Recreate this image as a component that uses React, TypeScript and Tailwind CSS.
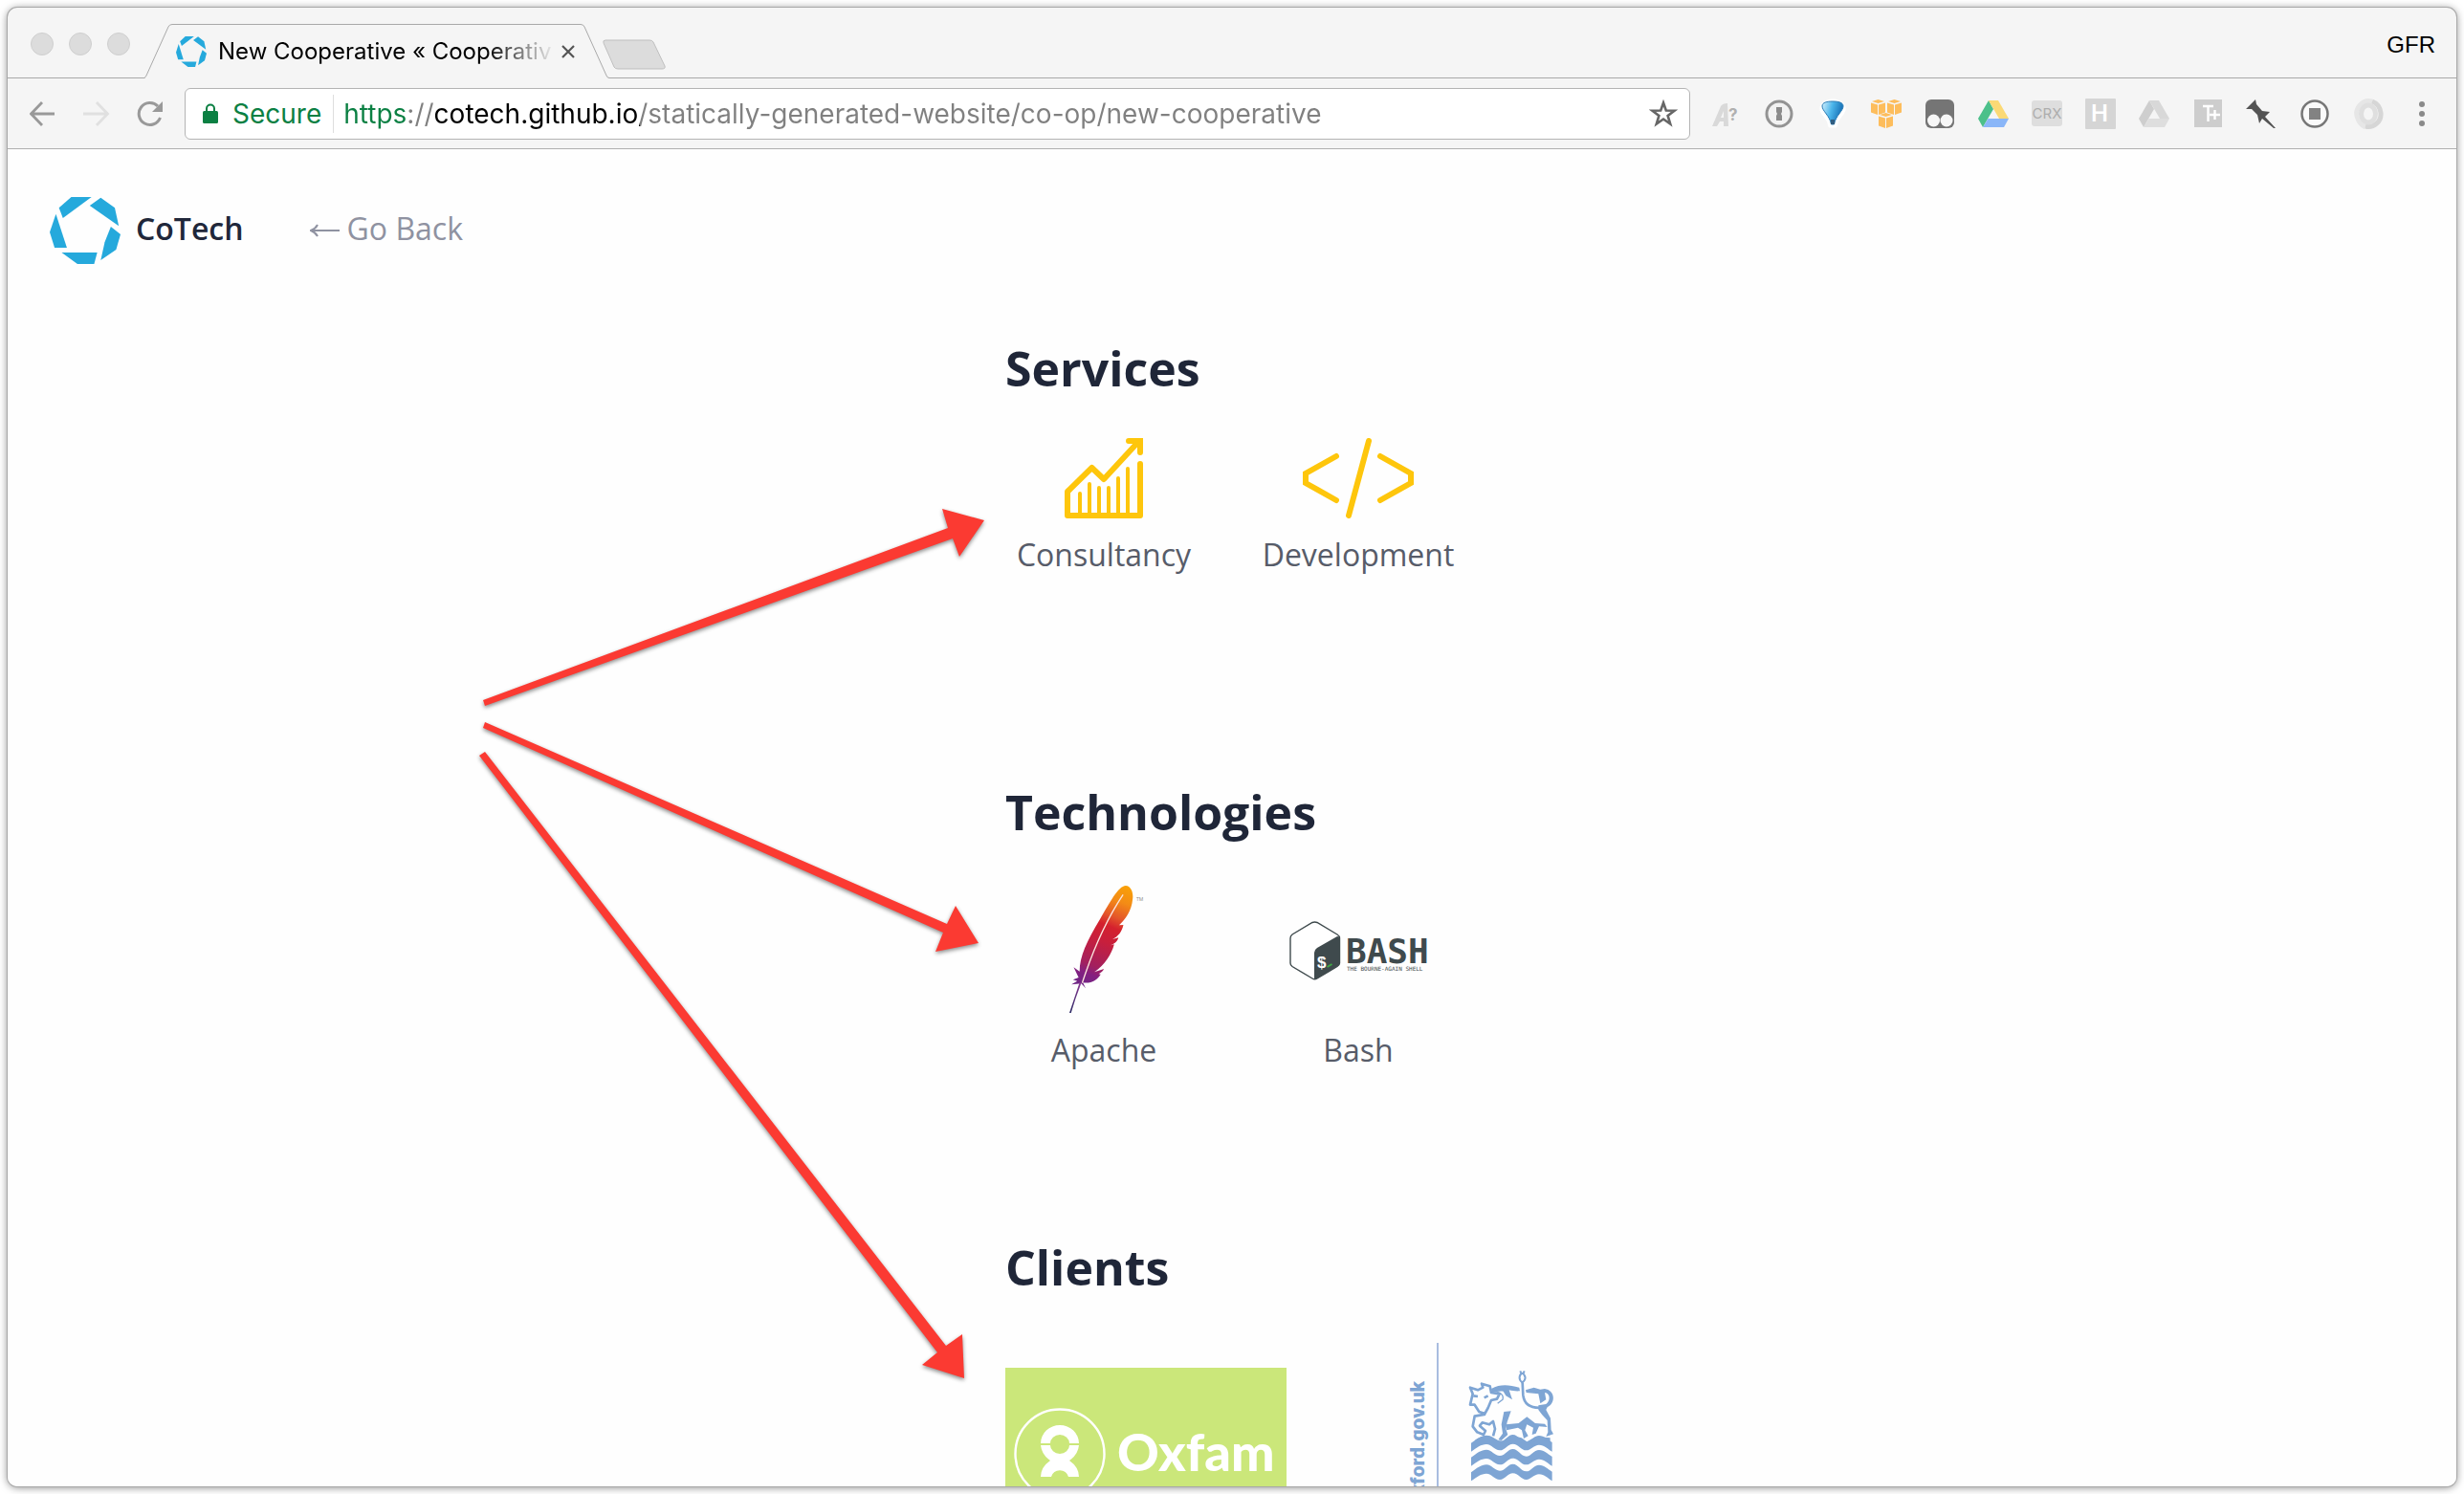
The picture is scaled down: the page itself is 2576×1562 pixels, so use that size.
import type { ReactNode } from "react";

function CoTechMark({ className }: { className: string }) {
  return (
    <svg className={className} viewBox="113 618 161 210" preserveAspectRatio="none" fill="#25a9dc" aria-hidden="true">
      <path d="M162 618H208L143 684L134 652Z" />
      <path d="M229 620L261 652L270 709L204 645Z" />
      <path d="M252 711L274 735L264 783L229 816L238 760Z" />
      <path d="M140 792H221L214 828H176Z" />
      <path d="M127 671L152 777H124L113 728Z" />
    </svg>
  );
}

function TabStrip() {
  return (
    <div className="flex h-[74px] items-end border-b border-[#a9a9a9]">
      <div className="flex gap-4 self-center pt-[3px] pl-6">
        {["Close window", "Minimise window", "Zoom window"].map((name) => (
          <button key={name} aria-label={name} className="size-6 rounded-full border border-[#cfcfcf] bg-[#dcdcdc]" />
        ))}
      </div>
      <div className="-mb-px ml-[15px] grid w-[486px]">
        <svg className="col-start-1 row-start-1 h-[57px] w-full" viewBox="0 0 486 57" aria-hidden="true">
          <path d="M0 56.5Q1 56 2 54L25 3Q26 .5 29 .5H456Q459 .5 460 3L483 54Q484 56.5 486 56.5V57H0Z" fill="#f5f5f5" />
          <path d="M0 56.5Q1 56 2 54L25 3Q26 .5 29 .5H456Q459 .5 460 3L483 54Q484 56.5 486 56.5" fill="none" stroke="#a9a9a9" />
        </svg>
        <div className="col-start-1 row-start-1 flex items-center pr-9 pl-[33px]">
          <CoTechMark className="size-8 shrink-0" />
          <span className="ml-3 flex-1 overflow-hidden bg-[linear-gradient(to_right,#000_280px,#f0f0f0_352px)] bg-clip-text text-2xl whitespace-nowrap text-transparent">
            New Cooperative « Cooperativ
          </span>
          <button aria-label="Close tab" className="ml-2">
            <svg className="size-[14px]" viewBox="0 0 14 14" stroke="#555" strokeWidth="2.2" aria-hidden="true">
              <path d="M1 1L13 13M13 1L1 13" />
            </svg>
          </button>
        </div>
      </div>
      <button aria-label="New tab" className="mb-2 -ml-2">
        <svg className="h-8 w-[67px]" viewBox="0 0 67 32" aria-hidden="true">
          <path d="M4 1H50Q53 1 54 3L66 28Q67 31 63 31H17Q14 31 13 29L2 4Q1 1 4 1Z" fill="#dcdcdc" stroke="#bfbfbf" />
        </svg>
      </button>
      <button className="mr-[22px] ml-auto self-center pt-1 font-['Liberation_Sans',sans-serif] text-2xl text-black">GFR</button>
    </div>
  );
}

function Drive({ colors }: { colors: [string, string, string] }) {
  return (
    <svg className="size-8" viewBox="0 0 32 32" aria-hidden="true">
      <path d="M11 2L0 21L5 30L16 11Z" fill={colors[0]} />
      <path d="M11 2H21L32 21H22Z" fill={colors[1]} />
      <path d="M10.500 21H32L27 30H5Z" fill={colors[2]} />
    </svg>
  );
}

const extensions: { name: string; icon: ReactNode }[] = [
  {
    name: "Font finder",
    icon: (
      <svg className="size-8" viewBox="0 0 32 32" aria-hidden="true">
        <path d="M2 29L11 8Q13 5 18 5L19 29H14V24H10L7 29ZM11 20H14V13Z" fill="#d9d9d9" fillRule="evenodd" />
        <text x="19" y="23" fontSize="17" fontWeight="700" fill="#b0b0b0">?</text>
      </svg>
    ),
  },
  {
    name: "1Password",
    icon: (
      <svg className="size-8" viewBox="0 0 32 32" aria-hidden="true">
        <circle cx="16" cy="16" r="13" fill="#f2f2f2" stroke="#939393" strokeWidth="3" />
        <path d="M13 9H19V14L18 16L19 18V23H13V18L14 16L13 14Z" fill="#8b8b8b" />
      </svg>
    ),
  },
  {
    name: "Balloon",
    icon: (
      <svg className="size-8" viewBox="0 0 32 32" aria-hidden="true">
        <defs>
          <linearGradient id="balloon" x1="0" x2="1" y1="0" y2=".3">
            <stop offset="0" stopColor="#d4f0fd" />
            <stop offset=".5" stopColor="#4bb5ea" />
            <stop offset="1" stopColor="#156fb5" />
          </linearGradient>
        </defs>
        <path d="M16 2C24 2 29 7 28 12C26 19 20 20 19 29H13C12 20 6 19 4 12C3 7 8 2 16 2Z" fill="#fff" stroke="#fff" strokeWidth="3" strokeLinejoin="round" />
        <path d="M16 3C22 3 27 4 27 8C27 13 19 18 17.500 27H14.500C13 18 5 13 5 8C5 4 10 3 16 3Z" fill="url(#balloon)" stroke="#2b7cb5" />
        <path d="M14 22H18V27H14Z" fill="#315d80" />
      </svg>
    ),
  },
  {
    name: "AWS",
    icon: (
      <svg className="size-8" viewBox="0 0 32 32" aria-hidden="true">
        {["translate(0 1)", "translate(17 1)", "translate(8 15)"].map((t) => (
          <g key={t} transform={t} fill="#fdbd5c">
            <path d="M1 2L7.500 0L14 2L7.500 4Z" />
            <path d="M0 3.500L7 5.500V16L0 13.500Z" />
            <path d="M15 3.500L8 5.500V16L15 13.500Z" />
          </g>
        ))}
      </svg>
    ),
  },
  {
    name: "Tampermonkey",
    icon: (
      <svg className="size-8" viewBox="0 0 32 32" aria-hidden="true">
        <rect x="1" y="1" width="30" height="30" rx="6" fill="#757575" />
        <circle cx="9.500" cy="23" r="6.500" fill="#f7f7f7" />
        <circle cx="23" cy="23" r="6.500" fill="#f7f7f7" />
      </svg>
    ),
  },
  { name: "Google Drive", icon: <Drive colors={["#4cc08a", "#fbd975", "#8ab6f8"]} /> },
  {
    name: "CRX viewer",
    icon: (
      <svg className="size-8" viewBox="0 0 32 32" aria-hidden="true">
        <rect y="2" width="32" height="27" rx="3" fill="#dedede" />
        <text x="16" y="21" textAnchor="middle" fontSize="15" fill="#adadad">CRX</text>
      </svg>
    ),
  },
  {
    name: "Header tool",
    icon: (
      <svg className="size-8" viewBox="0 0 32 32" aria-hidden="true">
        <rect width="32" height="32" rx="1" fill="#d5d5d5" />
        <text x="15" y="24" textAnchor="middle" fontSize="24" fontWeight="600" fill="#fff">H</text>
      </svg>
    ),
  },
  { name: "Drive saver", icon: <Drive colors={["#cecece", "#d8d8d8", "#dedede"]} /> },
  {
    name: "Text tool",
    icon: (
      <svg className="size-8" viewBox="0 0 32 32" aria-hidden="true">
        <rect x="2" y="1" width="29" height="29" fill="#cdcdcd" />
        <path d="M11 8H22M16.500 8V24M18 17H29M23.500 12V22" stroke="#fff" strokeWidth="2.400" />
      </svg>
    ),
  },
  {
    name: "Pin",
    icon: (
      <svg className="size-8" viewBox="0 0 32 32" aria-hidden="true">
        <path d="M10 1L11 6L17 13L25 14L20 19L31 31L29 31L17 21L14 26L12 17L6 11L0 11Z" fill="#545454" />
      </svg>
    ),
  },
  {
    name: "Stop",
    icon: (
      <svg className="size-8" viewBox="0 0 32 32" aria-hidden="true">
        <circle cx="16" cy="16" r="13.500" fill="#fafafa" stroke="#777" strokeWidth="2.500" />
        <rect x="10" y="10" width="12" height="12" fill="#828282" />
      </svg>
    ),
  },
  {
    name: "JSON view",
    icon: (
      <svg className="size-8" viewBox="0 0 32 32" fill="none" aria-hidden="true">
        <path d="M20 3A13 13 0 0 0 5 21Q7 27 13 30" stroke="#e6e6e6" strokeWidth="5" />
        <path d="M20 3Q28 6 29 15A13 13 0 0 1 13 29" stroke="#d6d6d6" strokeWidth="5" />
        <ellipse cx="16" cy="16" rx="7.500" ry="9" stroke="#dfdfdf" strokeWidth="5" />
      </svg>
    ),
  },
  {
    name: "Browser menu",
    icon: (
      <svg className="size-8" viewBox="0 0 32 32" fill="#8a8a8a" aria-hidden="true">
        <circle cx="16" cy="6" r="3" />
        <circle cx="16" cy="16" r="3" />
        <circle cx="16" cy="26" r="3" />
      </svg>
    ),
  },
];

function Toolbar() {
  return (
    <div className="flex h-[74px] items-center border-b border-[#b0b0b0] pr-5 pl-[23px]">
      <div className="flex gap-7">
        <button aria-label="Back">
          <svg className="size-7" viewBox="0 0 28 28" fill="none" stroke="#999" strokeWidth="2.800" aria-hidden="true">
            <path d="M26 14H2M13 2L1.500 14L13 26" />
          </svg>
        </button>
        <button aria-label="Forward">
          <svg className="size-7" viewBox="0 0 28 28" fill="none" stroke="#e0e0e0" strokeWidth="2.800" aria-hidden="true">
            <path d="M0 14H25M14 2L25.500 14L14 26" />
          </svg>
        </button>
        <button aria-label="Reload">
          <svg className="size-7" viewBox="0 0 28 28" aria-hidden="true">
            <path d="M24.500 18A11.500 11.500 0 1 1 22 6" fill="none" stroke="#999" strokeWidth="3" />
            <path d="M27 1V12H16Z" fill="#999" />
          </svg>
        </button>
      </div>
      <div className="ml-[22px] flex h-[54px] flex-1 items-center rounded-[6px] border border-[#b4b4b4] bg-white pr-3 pl-[18px]">
        <svg className="h-[22px] w-4" viewBox="0 0 16 22" aria-hidden="true">
          <rect y="8" width="16" height="13" rx="1.500" fill="#0b8043" />
          <path d="M4 9V5.500A4 4 0 0 1 12 5.500V9" fill="none" stroke="#0b8043" strokeWidth="2" />
        </svg>
        <span className="ml-[15px] text-[28px] text-[#0b8043]">Secure</span>
        <span className="ml-3 h-10 w-px bg-[#dedede]" />
        <input
          aria-label="Address"
          readOnly
          defaultValue="https://cotech.github.io/statically-generated-website/co-op/new-cooperative"
          className="ml-[10px] min-w-0 flex-1 bg-[linear-gradient(to_right,#0b8043_68px,#808080_68px,#808080_96px,#000_96px,#000_310px,#808080_310px)] bg-clip-text text-[28px] text-transparent outline-none"
        />
        <button aria-label="Bookmark this page">
          <svg className="size-[30px]" viewBox="0 0 30 30" aria-hidden="true">
            <path d="M15 3.500L17.800 11.500L26.500 11.700L19.600 17L22.200 25.500L15 20.500L7.800 25.500L10.400 17L3.500 11.700L12.200 11.500Z" fill="none" stroke="#666" strokeWidth="2.600" />
          </svg>
        </button>
      </div>
      <div className="ml-[21px] flex gap-6">
        {extensions.map((e) => (
          <button key={e.name} aria-label={e.name}>{e.icon}</button>
        ))}
      </div>
    </div>
  );
}

function ConsultancyIcon() {
  return (
    <svg className="h-[84px] w-[82px]" viewBox="0 0 82 84" fill="none" stroke="#fec60c" strokeLinecap="round" aria-hidden="true">
      <path d="M77 4L41 43L28.500 31L3 56V81H79V27" strokeWidth="6" strokeLinejoin="round" />
      <path d="M67 3H79V15" strokeWidth="6" />
      <path d="M16 80V58M26 80V48M36 80V52M46 80V52M56 80V42M66 80V32" strokeWidth="4" />
    </svg>
  );
}

function DevelopmentIcon() {
  return (
    <svg className="h-[84px] w-[116px]" viewBox="0 0 116 84" fill="none" stroke="#fec60c" strokeWidth="6" strokeLinecap="round" aria-hidden="true">
      <path d="M35 19L3 37V47L35 65M69 3L48 81M81 19L113 37V47L81 65" />
    </svg>
  );
}

function ApacheLogo() {
  return (
    <svg className="h-[134px] w-[84px]" viewBox="-6 0 84 134" aria-hidden="true">
      <defs>
        <linearGradient id="feather" x1="430" y1="380" x2="300" y2="690" gradientUnits="userSpaceOnUse">
          <stop offset="0" stopColor="#f9a008" />
          <stop offset=".15" stopColor="#f38b16" />
          <stop offset=".3" stopColor="#e4562a" />
          <stop offset=".4" stopColor="#d4212e" />
          <stop offset=".55" stopColor="#c81f3c" />
          <stop offset=".8" stopColor="#a2205f" />
          <stop offset=".88" stopColor="#852080" />
          <stop offset="1" stopColor="#6f2585" />
        </linearGradient>
        <linearGradient id="quill" x1="0" y1="0" x2="0" y2="1">
          <stop offset="0" stopColor="#8c3a94" />
          <stop offset="1" stopColor="#282662" />
        </linearGradient>
      </defs>
      <g transform="scale(.3443 .3333) translate(-257 -377)">
        <path
          d="M428 377C445 378 452 400 449 420C446 455 428 482 408 501L421 500C416 522 405 536 388 545L406 540C402 555 390 560 382 564L393 561C385 592 365 626 333 648L362 638C358 646 352 650 346 654L352 655C340 675 322 685 298 681L306 698L293 684L263 687L281 676L268 672L285 665L270 633L288 646C288 600 310 550 350 482C380 430 405 378 428 377Z"
          fill="url(#feather)"
        />
        <path d="M420 405C365 490 325 590 296 682" fill="none" stroke="#fbe3dc" strokeWidth="4" />
        <path d="M288 680L293 682Q275 730 262 776H257Q272 730 288 680Z" fill="url(#quill)" />
      </g>
      <text x="70" y="16" fontSize="5" fill="#888">TM</text>
    </svg>
  );
}

function BashLogo() {
  return (
    <svg className="h-16 w-[146px]" viewBox="-1 -2 146 64" aria-hidden="true">
      <path d="M24 1.500Q26.500 .5 29 1.500L50 14Q52.500 15.500 52.500 18V44Q52.500 46 50 47.500L29 60Q26.500 61.500 24 60L3 47.500Q1 46 1 44V18Q1 15.500 3 14Z" fill="#fff" stroke="#3f4a4d" strokeWidth="1.400" />
      <path d="M26 60.500V33Q26 30 29 28L50 16Q52.500 16 52.500 19V44Q52.500 46 50 47.500L29 60Q27 61 26 60.500Z" fill="#3f4a4d" />
      <text x="29" y="49" fontSize="17" fontWeight="700" fill="#fff" fontFamily="Liberation Sans, sans-serif">$</text>
      <path d="M39.500 48L44.500 45" stroke="#3fa845" strokeWidth="2" />
      <text x="59" y="44" fontSize="36" fontWeight="700" fill="#3f4a4d" fontFamily="DejaVu Sans Mono, monospace">BASH</text>
      <text x="60" y="52" fontSize="6" fill="#3f4a4d" fontFamily="DejaVu Sans Mono, monospace">THE BOURNE-AGAIN SHELL</text>
    </svg>
  );
}

function OxfamLogo() {
  return (
    <svg className="h-[180px] w-[294px] shrink-0" viewBox="0 0 294 180" role="img" aria-label="Oxfam">
      <rect width="294" height="180" fill="#cbe77a" />
      <circle cx="57" cy="90" r="46.500" fill="none" stroke="#fff" strokeWidth="2.400" />
      <path d="M37 79A20 19 0 0 1 77 79H67A10 9 0 0 0 47 79Z" fill="#fff" />
      <path d="M37 81H47A10 9 0 0 0 67 81H77Q76 91 67 97Q77 104 77 114H66A9.500 10 0 0 0 48 114H37Q37 104 47 97Q38 91 37 81Z" fill="#fff" />
      <text x="117" y="108" fontSize="54" fontWeight="900" fill="#fff" fontFamily="Lato, sans-serif">Oxfam</text>
    </svg>
  );
}

const wave =
  "M87 311C105 298 118 287 135 287C152 287 160 306 177 306C194 306 202 285 218 285C235 285 243 308 260 308C275 308 284 288 300 288C317 288 327 300 341 309V338C327 330 317 317 300 317C284 317 275 334 260 334C243 334 235 314 218 314C202 314 194 334 177 334C160 334 152 315 135 315C118 315 105 326 87 338Z";

function OxfordLogo() {
  return (
    <svg className="h-[242px] w-44 shrink-0" viewBox="0 0 176 242" role="img" aria-label="Oxford City Council">
      <rect x="36" y="5" width="2" height="232" fill="#a9bde0" />
      <text transform="translate(23 45) rotate(-90)" textAnchor="end" fontSize="21" fontWeight="900" fill="#7ea5d4" fontFamily="Roboto, sans-serif">
        oxford.gov.uk
      </text>
      <g transform="translate(43 21) scale(.3333)" fill="#7ea5d4">
        <path d={wave} transform="translate(0 -45)" />
        <path d={wave} />
        <path d={wave} transform="translate(0 47)" />
        <path d="M98 258Q128 238 150 245L172 258L200 262L216 243L245 250L262 262L290 246L335 250V262L300 255L262 272L218 255L178 272L135 255Z" />
        <path d="M150 96C180 80 205 84 238 92L240 103C226 104 216 102 206 100L216 130L196 118L188 104C176 102 164 106 152 106Z" />
        <path d="M258 100L284 92L304 98L318 96C350 100 354 140 326 154L322 162L336 188L338 225L345 238L322 246L328 232L326 195L310 178L298 162V148L322 144C336 134 336 110 318 108L322 130L304 142L298 112L260 108Z" />
        <path d="M196 208L236 204L262 184L288 204L318 206L326 216L300 214L290 236L278 240L282 218L262 208L256 226L266 244L252 252L246 226L234 218L198 226Z" />
        <path d="M190 168L212 166L200 200L196 222L202 240L182 258L172 256L186 236L182 208Z" />
        <g fill="none" stroke="#7ea5d4" strokeWidth="8" strokeLinejoin="round">
          <path d="M84 92L92 112L84 146L98 146L112 168L130 174L140 156L150 132L168 128L176 112L150 108L146 88L120 80L124 92L108 100Z" />
          <path d="M94 118L108 120M128 124L140 118" />
          <path d="M150 104C180 104 190 116 186 130L170 142" strokeWidth="4" />
          <path d="M132 176L98 182L92 214L106 232L126 240L132 228L114 212L122 202L144 208L156 198L162 222L156 244" />
          <path d="M248 76L250 116C254 150 280 158 312 155" />
          <path d="M247 46C236 54 236 68 247 76C260 68 260 56 247 46M241 40L245 50M254 40L250 50" strokeWidth="6" />
        </g>
      </g>
    </svg>
  );
}

function Item({ label, box, children }: { label: string; box: string; children: ReactNode }) {
  return (
    <li className="w-[206px]">
      <figure className="flex flex-col items-center">
        <div className={box}>{children}</div>
        <figcaption className="mt-[18px] text-[32px] leading-10 text-[#575c69]">{label}</figcaption>
      </figure>
    </li>
  );
}

function Heading({ children }: { children: ReactNode }) {
  return <h2 className="text-[50px] leading-[60px] font-bold text-[#1f2638]">{children}</h2>;
}

function Page() {
  return (
    <div className="min-h-0 flex-1 overflow-hidden bg-[#fefefe] font-['Open_Sans','Noto_Sans',sans-serif]">
      <header className="flex items-center px-11 pt-[50px] text-[32px] leading-10">
        <a href="#home" className="flex items-center gap-4 font-semibold text-[#20273a]">
          <CoTechMark className="h-[70px] w-[74px]" />
          <span className="pb-1">CoTech</span>
        </a>
        <a href="#back" className="ml-[69px] flex items-center gap-2 pb-1 text-[#8f92a1]">
          <svg className="mt-1 h-[14px] w-[31px]" viewBox="0 0 31 14" fill="none" stroke="#8f92a1" strokeWidth="2" aria-hidden="true">
            <path d="M31 7H2M8 1Q6 5 1 7Q6 9 8 13" />
          </svg>
          Go Back
        </a>
      </header>
      <main className="mx-auto w-[474px] pt-[79px]">
        <section>
          <Heading>Services</Heading>
          <ul className="mt-[43px] flex gap-[60px]">
            <Item label="Consultancy" box="h-[84px]"><ConsultancyIcon /></Item>
            <Item label="Development" box="h-[84px]"><DevelopmentIcon /></Item>
          </ul>
        </section>
        <section className="mt-[219px]">
          <Heading>Technologies</Heading>
          <ul className="mt-[47px] flex gap-[60px]">
            <Item label="Apache" box="flex h-[134px] items-center"><ApacheLogo /></Item>
            <Item label="Bash" box="flex h-[134px] items-center"><BashLogo /></Item>
          </ul>
        </section>
        <section className="mt-[177px]">
          <Heading>Clients</Heading>
          <div className="mt-11 flex items-center gap-[121px]">
            <OxfamLogo />
            <OxfordLogo />
          </div>
        </section>
      </main>
    </div>
  );
}

export default function App() {
  return (
    <div className="relative flex h-screen bg-white p-2 font-[Inter,sans-serif]">
      <div className="flex min-w-0 flex-1 flex-col overflow-hidden rounded-[10px] bg-[#f5f5f5] shadow-[0_0_0_1px_#a8a8a8,0_1px_8px_rgba(0,0,0,0.5)]">
        <TabStrip />
        <Toolbar />
        <Page />
      </div>
      <svg className="pointer-events-none absolute top-0 left-0 h-[1500px] w-[1100px] drop-shadow-[0_2px_2px_rgba(0,0,0,0.45)]" viewBox="0 0 1100 1500" fill="#fb3a32" aria-hidden="true">
        <path d="M505 732L991 552L985 532L1029 544L1003 582L996 563L507 738Z" />
        <path d="M507 755L990 966L999 947L1023 986L978 995L986 975L505 761Z" />
        <path d="M507 786L989 1407L1006 1395L1008 1441L964 1427L980 1414L501 790Z" />
      </svg>
    </div>
  );
}
